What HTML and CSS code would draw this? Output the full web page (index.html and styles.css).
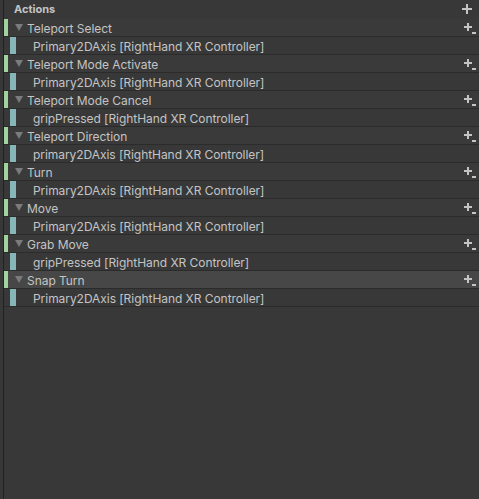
FILE: index.html
```html
<!DOCTYPE html>
<html>
<head>
<meta charset="utf-8">
<link rel="stylesheet" href="styles.css">
</head>
<body>
<div class="panel">
  <div class="header">
    <span class="title">Actions</span>
    <svg class="plus" width="10" height="10" viewBox="0 0 10 10"><rect x="4" y="0" width="2" height="10"/><rect x="0" y="4" width="10" height="2"/></svg>
  </div>
  <div class="list">
    <div class="row action"><span class="bar green"></span><span class="tri"></span><span class="label">Teleport Select</span><svg class="plusdd" width="12" height="12" viewBox="0 0 12 12"><rect x="3" y="0" width="2" height="8"/><rect x="0" y="3" width="8" height="2"/><rect x="8" y="9" width="4" height="2"/></svg></div>
    <div class="row binding"><span class="bar blue"></span><span class="label">Primary2DAxis [RightHand XR Controller]</span></div>
    <div class="row action"><span class="bar green"></span><span class="tri"></span><span class="label">Teleport Mode Activate</span><svg class="plusdd" width="12" height="12" viewBox="0 0 12 12"><rect x="3" y="0" width="2" height="8"/><rect x="0" y="3" width="8" height="2"/><rect x="8" y="9" width="4" height="2"/></svg></div>
    <div class="row binding"><span class="bar blue"></span><span class="label">Primary2DAxis [RightHand XR Controller]</span></div>
    <div class="row action"><span class="bar green"></span><span class="tri"></span><span class="label">Teleport Mode Cancel</span><svg class="plusdd" width="12" height="12" viewBox="0 0 12 12"><rect x="3" y="0" width="2" height="8"/><rect x="0" y="3" width="8" height="2"/><rect x="8" y="9" width="4" height="2"/></svg></div>
    <div class="row binding"><span class="bar blue"></span><span class="label">gripPressed [RightHand XR Controller]</span></div>
    <div class="row action"><span class="bar green"></span><span class="tri"></span><span class="label">Teleport Direction</span><svg class="plusdd" width="12" height="12" viewBox="0 0 12 12"><rect x="3" y="0" width="2" height="8"/><rect x="0" y="3" width="8" height="2"/><rect x="8" y="9" width="4" height="2"/></svg></div>
    <div class="row binding"><span class="bar blue"></span><span class="label">primary2DAxis [RightHand XR Controller]</span></div>
    <div class="row action"><span class="bar green"></span><span class="tri"></span><span class="label">Turn</span><svg class="plusdd" width="12" height="12" viewBox="0 0 12 12"><rect x="3" y="0" width="2" height="8"/><rect x="0" y="3" width="8" height="2"/><rect x="8" y="9" width="4" height="2"/></svg></div>
    <div class="row binding"><span class="bar blue"></span><span class="label">Primary2DAxis [RightHand XR Controller]</span></div>
    <div class="row action"><span class="bar green"></span><span class="tri"></span><span class="label">Move</span><svg class="plusdd" width="12" height="12" viewBox="0 0 12 12"><rect x="3" y="0" width="2" height="8"/><rect x="0" y="3" width="8" height="2"/><rect x="8" y="9" width="4" height="2"/></svg></div>
    <div class="row binding"><span class="bar blue"></span><span class="label">Primary2DAxis [RightHand XR Controller]</span></div>
    <div class="row action"><span class="bar green"></span><span class="tri"></span><span class="label">Grab Move</span><svg class="plusdd" width="12" height="12" viewBox="0 0 12 12"><rect x="3" y="0" width="2" height="8"/><rect x="0" y="3" width="8" height="2"/><rect x="8" y="9" width="4" height="2"/></svg></div>
    <div class="row binding"><span class="bar blue"></span><span class="label">gripPressed [RightHand XR Controller]</span></div>
    <div class="row action selected"><span class="bar green"></span><span class="tri"></span><span class="label">Snap Turn</span><svg class="plusdd" width="12" height="12" viewBox="0 0 12 12"><rect x="3" y="0" width="2" height="8"/><rect x="0" y="3" width="8" height="2"/><rect x="8" y="9" width="4" height="2"/></svg></div>
    <div class="row binding"><span class="bar blue"></span><span class="label">Primary2DAxis [RightHand XR Controller]</span></div>
  </div>
</div>
</body>
</html>
```

FILE: styles.css
```css
html, body {
  margin: 0;
  padding: 0;
  background: #383838;
  height: 100%;
}
body {
  font-family: Inter, "Noto Sans", sans-serif;
  color: #c4c4c4;
  font-size: 12px;
}
.panel {
  margin-left: 3px;
  border-left: 1px solid #222222;
  height: 499px;
  box-sizing: border-box;
}
.header {
  height: 19px;
  display: flex;
  align-items: center;
  justify-content: space-between;
  padding-left: 10px;
  padding-right: 7px;
  box-sizing: border-box;
}
.title {
  font-weight: 700;
  font-size: 11px;
  margin-top: -1px;
}
.plus {
  fill: #c4c4c4;
  margin-top: -2px;
}
.row {
  height: 18px;
  box-sizing: border-box;
  border-bottom: 1px solid #2b2b2b;
  display: flex;
  align-items: center;
  position: relative;
}
.action {
  background: #3a3a3a;
}
.action.selected {
  background: #474747;
}
.bar {
  align-self: stretch;
  display: block;
}
.green {
  width: 4px;
  background: #a2d39e;
}
.blue {
  width: 6px;
  margin-left: 6px;
  background: #87b6b9;
}
.tri {
  width: 0;
  height: 0;
  border-left: 4.5px solid transparent;
  border-right: 4.5px solid transparent;
  border-top: 7px solid #7b7b7b;
  margin-left: 7px;
  margin-right: 4px;
}
.label {
  padding-top: 2px;
  letter-spacing: -0.05px;
}
.action .label {
  flex: 1;
}
.binding .label {
  margin-left: 17px;
}
.plusdd {
  fill: #c4c4c4;
  margin-right: 3px;
  margin-top: 2px;
}
```
